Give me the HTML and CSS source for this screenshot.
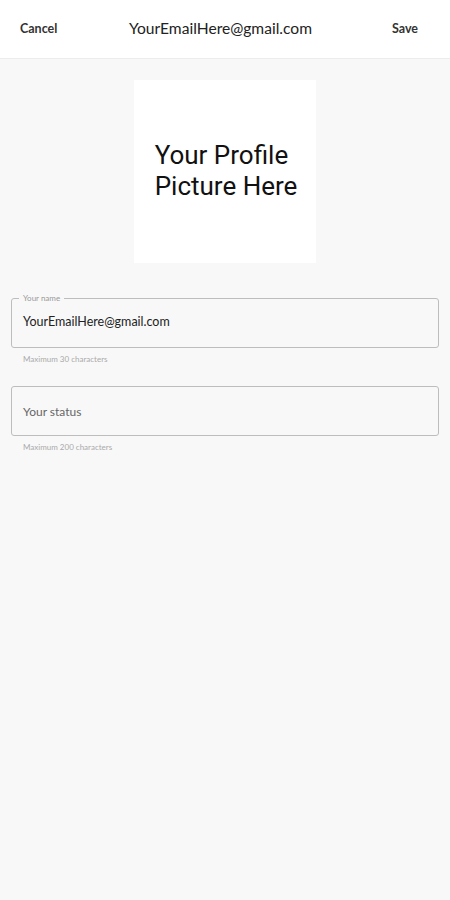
FILE: index.html
```html
<!DOCTYPE html>
<html lang="en">

<head>
  <meta charset="UTF-8" />
  <title>Edit Profile</title>
  <link rel="stylesheet" href="styles.css">
</head>

<body>
  <header class="topbar">
    <span class="action">Cancel</span>
    <span class="title">YourEmailHere@gmail.com</span>
    <span class="action">Save</span>
  </header>

  <main class="content">
    <div class="avatar">
      <p>Your Profile<br />Picture Here</p>
    </div>

    <div class="field">
      <div class="box filled">
        <span class="legend">Your name</span>
        <span class="value">YourEmailHere@gmail.com</span>
      </div>
      <p class="hint">Maximum 30 characters</p>
    </div>

    <div class="field">
      <div class="box">
        <span class="placeholder">Your status</span>
      </div>
      <p class="hint">Maximum 200 characters</p>
    </div>
  </main>
</body>

</html>
```

FILE: styles.css
```css
body {
  margin: 0;
  font-family: Lato, "Open Sans", sans-serif;
  background-color: #f8f8f8;
  height: 100vh;
  color: #222;
}

.topbar {
  height: 59px;
  background: white;
  border-bottom: 1px solid #ececec;
  display: flex;
  align-items: center;
  justify-content: space-between;
  padding: 0 20px 2px 20px;
  box-sizing: border-box;
}

.action {
  font-size: 12.5px;
  font-weight: bold;
  color: #333;
  width: 44px;
}

.action:last-child {
  text-align: right;
  width: 44px;
  margin-right: 12px;
}

.title {
  font-size: 15.6px;
  color: #222;
  padding-left: 3px;
}

.content {
  padding: 21px 11px 0 11px;
}

.avatar {
  width: 182px;
  height: 183px;
  margin: 0 auto;
  background: white;
  display: flex;
  align-items: center;
  justify-content: center;
}

.avatar p {
  margin: 0;
  font-family: Roboto, sans-serif;
  font-size: 26px;
  line-height: 31px;
  color: #111;
  padding-bottom: 2px;
  padding-left: 2px;
}

.field {
  margin-top: 35px;
}

.field + .field {
  margin-top: 22px;
}

.box {
  position: relative;
  height: 50px;
  border: 1px solid #bdbdbd;
  border-radius: 3px;
  display: flex;
  align-items: center;
  padding: 0 11px;
  box-sizing: border-box;
}

.legend {
  position: absolute;
  top: -6px;
  left: 7px;
  padding: 0 4px;
  background: #f8f8f8;
  font-size: 8px;
  color: #999;
  line-height: 10px;
}

.value {
  font-size: 12.5px;
  color: #222;
  padding-bottom: 3px;
}

.placeholder {
  font-size: 12px;
  color: #666;
}

.hint {
  margin: 6px 0 0 12px;
  font-size: 8px;
  color: #aaa;
}
```
